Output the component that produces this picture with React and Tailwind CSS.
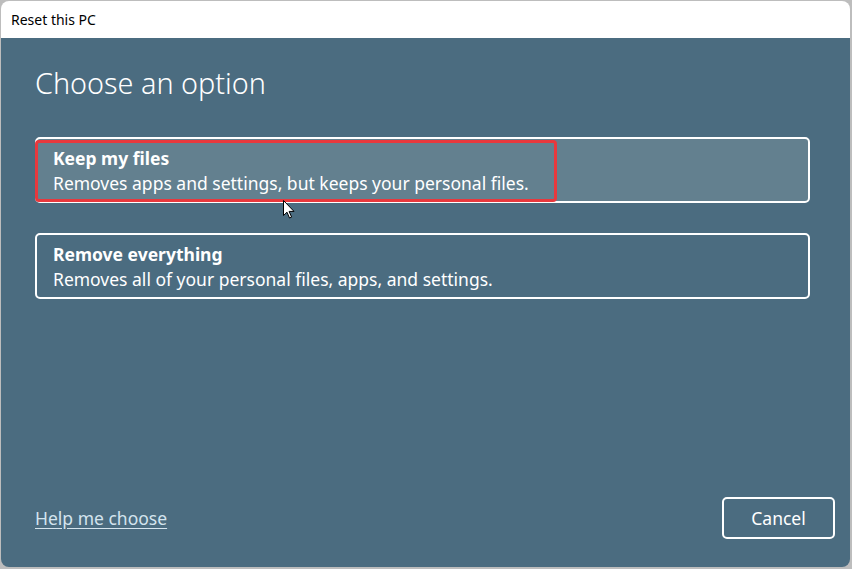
const Cursor = () => (
  <svg width="12" height="19" viewBox="0 0 12 19" className="absolute left-[282px] top-[199px]">
    <path d="M0.5 0.5 L0.5 15.5 L4 12.2 L6.5 18 L8.6 17.1 L6.1 11.4 L11 11.4 Z" fill="#fff" stroke="#000" strokeWidth="1" strokeLinejoin="round" />
  </svg>
);

const Option = ({ title, desc, active }) => (
  <div
    className={
      "relative h-[66px] rounded-[5px] border-2 border-white flex flex-col justify-center pl-[16px] pt-[2px] " +
      (active ? "bg-[#63808f]" : "bg-[#4b6c80]")
    }
  >
    {active && (
      <div className="absolute left-[-2px] top-[1px] w-[522px] h-[62px] rounded-[4px] border-[3px] border-[#e8383d]" />
    )}
    <div className="text-[17.5px] leading-[25px] font-bold text-white">{title}</div>
    <div className="text-[17.5px] leading-[25px] text-white">{desc}</div>
  </div>
);

const App = () => {
  return (
    <div className="w-[852px] h-[569px] bg-[#bdbdbd] pl-[1px] pt-[1px] pr-[2px] pb-[2px] font-['Segoe_UI','Noto_Sans',sans-serif]">
      <div className="relative w-full h-full rounded-[8px] overflow-hidden flex flex-col">
        <div className="h-[37px] bg-white flex items-center pl-[10px] text-[14px] text-black">Reset this PC</div>
        <div className="flex-1 bg-[#4b6c80] flex flex-col pl-[34px] pr-[15px]">
          <h1 className="mt-[26px] text-[28.8px] leading-[38px] font-light text-white">Choose an option</h1>
          <div className="mt-[35px] mr-[25px] flex flex-col gap-[30px]">
            <Option active title="Keep my files" desc="Removes apps and settings, but keeps your personal files." />
            <Option title="Remove everything" desc="Removes all of your personal files, apps, and settings." />
          </div>
          <div className="mt-auto mb-[28px] flex items-center justify-between">
            <a className="text-[17.5px] text-[#d4e4ee] underline underline-offset-[3px]">Help me choose</a>
            <button className="w-[113px] h-[42px] rounded-[5px] border-2 border-white text-[17.5px] text-white">Cancel</button>
          </div>
        </div>
        <Cursor />
      </div>
    </div>
  );
};

export default App;
